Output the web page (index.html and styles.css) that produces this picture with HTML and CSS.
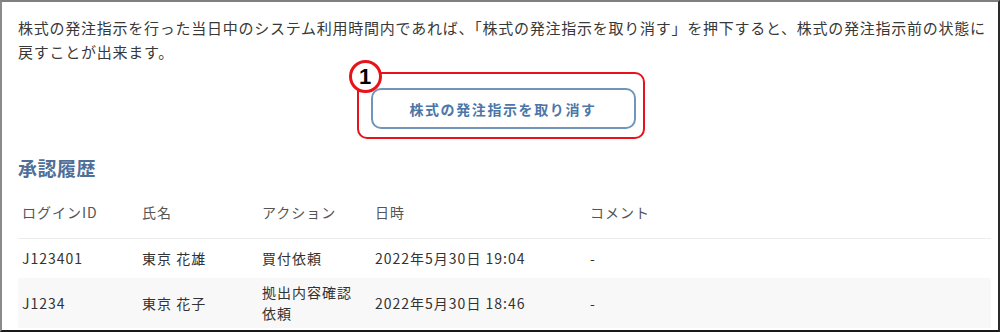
FILE: index.html
```html
<!DOCTYPE html>
<html lang="ja">
<head>
  <meta charset="UTF-8">
  <title>承認履歴</title>
  <link rel="stylesheet" href="styles.css">
</head>
<body>
  <div class="frame">
    <p class="lead">株式の発注指示を行った当日中のシステム利用時間内であれば、「株式の発注指示を取り消す」を押下すると、株式の発注指示前の状態に戻すことが出来ます。</p>

    <!-- Cancel button with callout -->
    <div class="action-row">
      <div class="callout">
        <span class="badge">1</span>
        <button class="cancel-btn" type="button">株式の発注指示を取り消す</button>
      </div>
    </div>

    <h2 class="section-title">承認履歴</h2>
    <table class="history">
      <thead>
        <tr>
          <th class="col-id">ログインID</th>
          <th class="col-name">氏名</th>
          <th class="col-action">アクション</th>
          <th class="col-date">日時</th>
          <th>コメント</th>
        </tr>
      </thead>
      <tbody>
        <tr>
          <td>J123401</td>
          <td>東京 花雄</td>
          <td>買付依頼</td>
          <td>2022年5月30日 19:04</td>
          <td>-</td>
        </tr>
        <tr class="alt">
          <td>J1234</td>
          <td>東京 花子</td>
          <td>拠出内容確認<br>依頼</td>
          <td>2022年5月30日 18:46</td>
          <td>-</td>
        </tr>
      </tbody>
    </table>
  </div>
</body>
</html>
```

FILE: styles.css
```css
/* Page base */
body {
  margin: 0;
  padding: 0;
  font-family: "Noto Sans CJK JP", "Noto Sans", sans-serif;
  color: #333;
  background: #fff;
}
/* Screenshot frame */
.frame {
  box-sizing: border-box;
  width: 1000px;
  height: 332px;
  overflow: hidden;
  border-top: 2px solid #808080;
  border-left: 2px solid #8a8a8a;
  border-right: 2px solid #2b2b2b;
  border-bottom: 2px solid #1a1a1a;
  padding: 14px 7px 0 16px;
}
.lead {
  margin: 0;
  font-size: 15px;
  line-height: 24px;
  letter-spacing: 0.75px;
  color: #383838;
}
/* Button area */
.action-row {
  display: flex;
  justify-content: center;
  padding-right: 8px;
  margin-top: 8px;
}
.callout {
  position: relative;
  border: 2px solid #e8121b;
  border-radius: 10px;
  padding: 14px 7px 8px 12px;
}
.badge {
  position: absolute;
  left: -10px;
  top: -14px;
  box-sizing: border-box;
  width: 33px;
  height: 33px;
  border: 3px solid #e8121b;
  border-radius: 50%;
  background: #fff;
  color: #000;
  font-family: "Liberation Sans", Arial, sans-serif;
  font-weight: bold;
  font-size: 22px;
  line-height: 27px;
  text-align: center;
}
.cancel-btn {
  display: block;
  width: 265px;
  height: 41px;
  border: 2px solid #7196bd;
  border-radius: 10px;
  background: #fff;
  color: #4c76a8;
  font-family: "Noto Sans CJK JP", sans-serif;
  font-weight: bold;
  font-size: 14px;
  letter-spacing: 1.6px;
  padding: 0;
}
/* History table */
.section-title {
  margin: 15px 0 4px 0;
  font-size: 19px;
  line-height: 28px;
  font-weight: bold;
  letter-spacing: 0.5px;
  color: #4f6f98;
}
.history {
  width: 973px;
  border-collapse: collapse;
  font-size: 14px;
  letter-spacing: 1px;
}
.history th {
  text-align: left;
  font-weight: normal;
  color: #555;
  padding: 15px 4px;
  line-height: 22px;
  border-bottom: 1px solid #ececec;
}
.history td {
  height: 31px;
  padding: 4px 4px;
  line-height: 21px;
  color: #333;
  vertical-align: middle;
}
.history .alt td {
  background: #f9f8f8;
}
.col-id { width: 112px; }
.col-name { width: 112px; }
.col-action { width: 105px; }
.col-date { width: 207px; }
```
